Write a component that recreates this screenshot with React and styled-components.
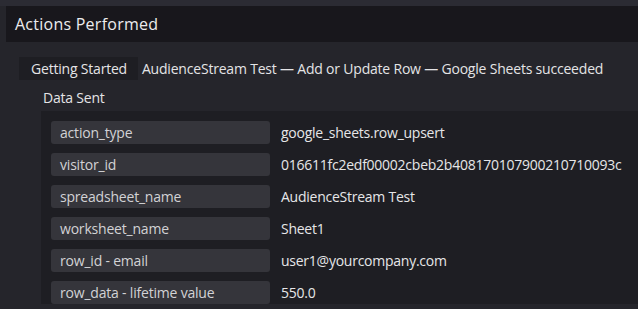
import React from "react";
import styled, { createGlobalStyle } from "styled-components";

const GlobalStyle = createGlobalStyle`
  html, body {
    margin: 0;
    padding: 0;
    background: #25252b;
  }
  body {
    font-family: "Open Sans", "Liberation Sans", sans-serif;
    color: #e2e2e4;
    overflow: hidden;
  }
`;

const Page = styled.div`
  width: 638px;
  height: 309px;
  background: #25252b;
  border-top: 6px solid #2b2b33;
  box-sizing: border-box;
  overflow: hidden;
`;

const Header = styled.div`
  margin-left: 6px;
  height: 36px;
  background: #18171c;
  display: flex;
  align-items: center;
  padding-left: 9px;
  font-size: 16px;
  color: #ececee;
  letter-spacing: 0.25px;
`;

const Body = styled.div`
  padding: 15px 0 0 19px;
  font-size: 14px;
  letter-spacing: -0.2px;
`;

const SummaryRow = styled.div`
  display: flex;
  align-items: center;
  height: 23px;
`;

const Tab = styled.div`
  background: #1e1e23;
  height: 100%;
  display: flex;
  align-items: center;
  padding: 0 11px 0 12px;
  color: #e4e4e6;
`;

const Summary = styled.div`
  padding-left: 4px;
  color: #e4e4e6;
`;

const SectionLabel = styled.div`
  margin: 8px 0 0 24px;
  color: #e4e4e6;
`;

const DataPanel = styled.div`
  margin: 4px 0 0 22px;
  background: #1e1e23;
  padding: 10px 0 0 10px;
  display: flex;
  flex-direction: column;
  gap: 9px;
`;

const Row = styled.div`
  display: flex;
  align-items: center;
`;

const Key = styled.div`
  width: 219px;
  height: 23px;
  box-sizing: border-box;
  background: #35353b;
  border-radius: 3px;
  padding-left: 9px;
  display: flex;
  align-items: center;
  color: #d2d2d5;
`;

const Value = styled.div`
  padding-left: 11px;
  color: #e6e6e8;
  white-space: nowrap;
  letter-spacing: -0.25px;
`;

const data = [
  ["action_type", "google_sheets.row_upsert"],
  ["visitor_id", "016611fc2edf00002cbeb2b408170107900210710093c"],
  ["spreadsheet_name", "AudienceStream Test"],
  ["worksheet_name", "Sheet1"],
  ["row_id - email", "user1@yourcompany.com"],
  ["row_data - lifetime value", "550.0"],
];

export default function App() {
  return (
    <>
      <GlobalStyle />
      <Page>
        <Header>Actions Performed</Header>
        <Body>
          <SummaryRow>
            <Tab>Getting Started</Tab>
            <Summary>
              AudienceStream Test — Add or Update Row — Google Sheets succeeded
            </Summary>
          </SummaryRow>
          <SectionLabel>Data Sent</SectionLabel>
          <DataPanel>
            {data.map(([k, v]) => (
              <Row key={k}>
                <Key>{k}</Key>
                <Value>{v}</Value>
              </Row>
            ))}
          </DataPanel>
        </Body>
      </Page>
    </>
  );
}
